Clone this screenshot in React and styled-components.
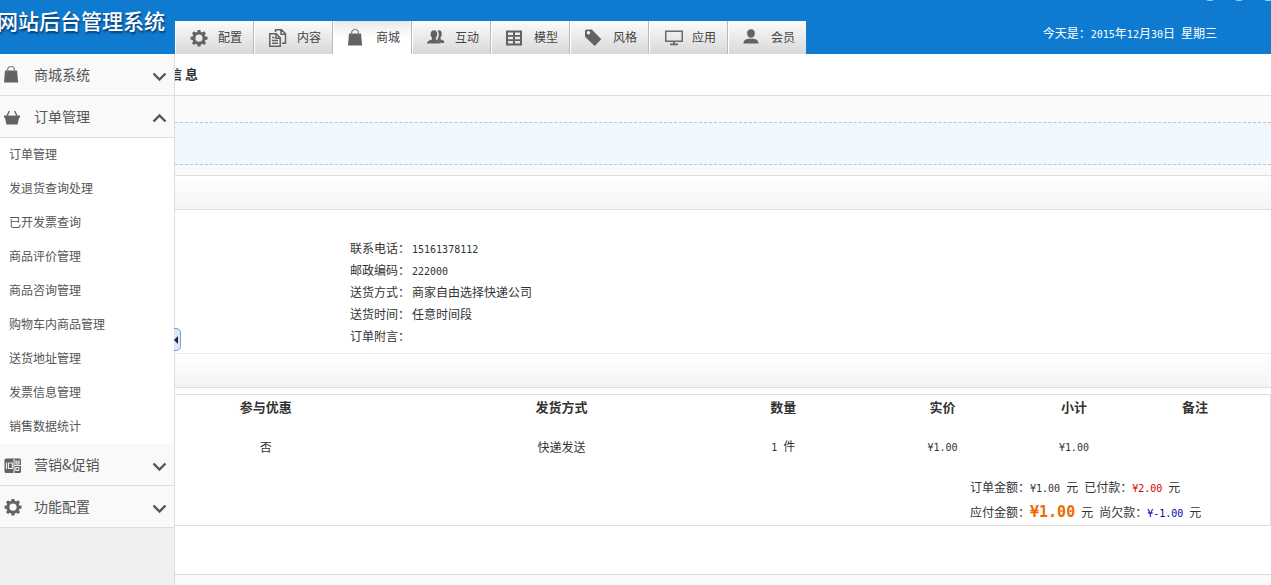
import React from "react";
import styled, { createGlobalStyle, css } from "styled-components";

const GlobalStyle = createGlobalStyle`
  *, *::before, *::after { box-sizing: border-box; }
  body {
    margin: 0;
    background: #fff;
    color: #333;
    font: 12px/22px "Noto Sans CJK SC", sans-serif;
  }
  h1, h2, p, dl, dd, ul { margin: 0; padding: 0; font-weight: normal; }
  button { font: inherit; color: inherit; cursor: pointer; }
  a { color: inherit; text-decoration: none; }
`;

const Page = styled.div`
  display: flex;
  flex-direction: column;
  min-height: 100vh;
`;

const Header = styled.header`
  position: relative;
  display: flex;
  height: 54px;
  background: #0e7bd0;
  overflow: hidden;
`;

const Brand = styled.div`
  display: flex;
  justify-content: flex-end;
  flex: none;
  width: 175px;
  padding-right: 10px;
  font-size: 21px;
  font-weight: 500;
  line-height: 40px;
  white-space: nowrap;
  color: #fff;
  text-shadow: 1px 2px 2px rgba(0, 30, 70, 0.7);
`;

const Nav = styled.nav`
  display: flex;
  align-self: flex-end;
  height: 33px;
`;

const Tab = styled.a`
  display: flex;
  align-items: center;
  gap: 10px;
  width: 79px;
  padding: 0 0 0 14px;
  border-left: 1px solid #fff;
  border-right: 1px solid #b9b9b9;
  background: linear-gradient(#fbfbfb, #d8d8d8);
  color: #444;
  white-space: nowrap;
  ${(p) => p.$active && css`background: linear-gradient(#e8e8e8, #fff 50%);`}
  &:last-child { width: 78px; border-right: 0; }
`;

const TabLabel = styled.span`
  padding-bottom: 2px;
`;

const Glyph = styled.svg`
  display: block;
  flex: none;
  width: 18px;
  height: 18px;
  overflow: visible;
  fill: #626262;
`;

const Today = styled.p`
  margin-left: auto;
  padding: 22px 54px 0 0;
  display: flex;
  gap: 6px;
  white-space: nowrap;
  color: #fff;
`;

const Bubbles = styled.div`
  position: absolute;
  top: -15px;
  right: -5px;
  display: flex;
  gap: 13px;
`;

const Bubble = styled.span`
  width: 16px;
  height: 16px;
  border-radius: 50%;
  background: #9fdcf5;
`;

const Body = styled.div`
  display: flex;
  flex: 1;
`;

const Sidebar = styled.aside`
  position: relative;
  flex: none;
  width: 175px;
  border-right: 1px solid #dcdcdc;
  background: #f0f0f0;
`;

const Section = styled.button`
  display: flex;
  align-items: center;
  width: 100%;
  height: 42px;
  padding: 0 7px 0 4px;
  border: 0;
  border-bottom: 1px solid #dedede;
  background: #f9f9f9;
  color: #555;
  font-size: 14px;
  text-align: left;
`;

const SectionName = styled.span`
  flex: 1;
  padding: 0 0 2px 12px;
`;

const Chevron = styled.svg`
  width: 15px;
  height: 10px;
  margin-top: 3px;
  fill: none;
  stroke: #555;
  stroke-width: 2.4;
`;

const Menu = styled.ul`
  list-style: none;
  background: #fff;
`;

const MenuLink = styled.a`
  display: block;
  padding: 0 0 2px 9px;
  line-height: 32px;
  color: #555;
`;

const Handle = styled.button`
  position: absolute;
  top: 274px;
  left: 174px;
  display: flex;
  align-items: center;
  width: 7px;
  height: 23px;
  padding: 0;
  border: 1px solid #7f9fce;
  border-left: 0;
  border-radius: 0 5px 5px 0;
  background: #dbe8f9;
`;

const Main = styled.main`
  display: flex;
  flex-direction: column;
  flex: 1;
  min-width: 0;
  overflow: hidden;
`;

const Title = styled.h1`
  height: 42px;
  margin-left: -6px;
  border-bottom: 1px solid #dedede;
  font-size: 13px;
  font-weight: bold;
  line-height: 40px;
`;

const Notice = styled.div`
  padding: 26px 0 10px;
  background: #fafafa;
`;

const NoticeStrip = styled.div`
  height: 43px;
  border: 1px dashed #bfc7cc;
  border-width: 1px 0;
  background: #f0f8ff;
`;

const Band = styled.div`
  flex: none;
  height: 35px;
  border-top: 1px solid ${(p) => (p.$soft ? "#ececec" : "#dedede")};
  border-bottom: 1px solid #dedede;
  background: linear-gradient(#fff, #f4f4f4);
`;

const Details = styled.dl`
  padding: 27px 20px 6px 175px;
`;

const Detail = styled.div`
  display: flex;
  height: 22px;
  gap: 2px;
`;

const Num = styled.span`
  font-family: "DejaVu Sans Mono", monospace;
  font-size: 10px;
  color: ${(p) => p.$color || "inherit"};
`;

const Due = styled(Num)`
  font-size: 15px;
  font-weight: bold;
`;

const Goods = styled.div`
  margin-top: 6px;
  border: 1px solid #dcdcdc;
  border-left: 0;
  padding-bottom: 1px;
`;

const Table = styled.table`
  width: 100%;
  border-collapse: collapse;
  table-layout: fixed;
  text-align: center;
`;

const Column = styled.col`
  width: ${(p) => p.$share}%;
`;

const Th = styled.th`
  height: 26px;
  padding: 0 0 2px;
  font-size: 13px;
  &:first-child { padding-right: 57px; }
`;

const Td = styled.td`
  height: 53px;
  padding: 0 0 1px;
  &:first-child { padding-right: 57px; }
`;

const Totals = styled.div`
  width: 300px;
  margin-left: auto;
`;

const TotalLine = styled.p`
  display: flex;
  gap: 6px;
  height: 25px;
  line-height: 25px;
  white-space: nowrap;
`;

const Footer = styled.footer`
  flex: 1;
  margin-top: 48px;
  border-top: 1px solid #dcdcdc;
  background: #fafafa;
`;

const icons = {
  gear: (
    <path transform="scale(0.9)" fillRule="evenodd" d="M8.4 1h3.2l.4 2.3 1.6.7 2-1.4 2.1 2.1-1.3 2 .7 1.6 2.4.4v2.9l-2.4.5-.7 1.6 1.4 2-2.2 2.1-2-1.3-1.6.7-.4 2.3H8.400l-.4-2.300-1.600-.7-2 1.300-2.200-2.100 1.400-2-.7-1.600L.6 11.600V8.700L2.900 8.300l.7-1.600-1.300-2L4.400 2.600l2 1.400 1.600-.7zM10 6.200a4 4 0 1 0 0 8 4 4 0 0 0 0-8z" />
  ),
  pages: (
    <g transform="translate(-1 -1)" fill="none" stroke="#626262" strokeWidth="1.500">
      <path d="M1.800 5.800h6.400l4 4v8.400H1.800z" fill="#ececec" />
      <path d="M8 6v4.200h4.200M4 9.500h2.500M4 12.500h6M4 15.300h6M7.500 4V1.800h6l4 4v9.400h-3.500M13 2v4.200h4.200" />
    </g>
  ),
  bag: (
    <g>
      <path d="M1 4.500h12L14.200 16.500H0z" />
      <path d="M3.500 6.500V4a3.500 3.500 0 0 1 7 0v2.500" fill="none" stroke="#808080" strokeWidth="1.200" />
    </g>
  ),
  people: (
    <g transform="translate(-1 -1)">
      <path d="M11.500 2.600c3-.9 4.500 1 4.200 3.600-.1 1.800-.7 2.700-1.200 3.600v1.400l3.700 1.700v2.200h-3.700c-.3-1.300-1.400-1.900-3-2.600V11c1.400-1.900 2-5.500 0-8.400z" />
      <path d="M8 2.200c2.300 0 3.400 1.700 3.200 4-.1 1.700-.7 2.700-1.400 3.700v1.500c2.200.8 4.400 1.300 4.600 4.100H1c.2-2.800 2.500-3.300 5-4.100V9.900C5.200 8.900 4.700 7.900 4.600 6.200c-.1-2.300 1.100-4 3.400-4z" />
    </g>
  ),
  grid: <path transform="translate(-2 -1)" fillRule="evenodd" d="M2 2.500h16v15H2zM4 4.500v2.500h5V4.500zm7 0v2.500h5V4.500zM4 8.800v2.500h5V8.800zm7 0v2.500h5V8.800zm-7 4.300v2.400h5v-2.400zm7 0v2.400h5v-2.400z" />,
  tag: <path transform="translate(-2 -1)" fillRule="evenodd" d="M2 2.500 3.200 1.400h5.600L18.300 11.300 11.700 18 2 8.800zM5.500 3a1.800 1.800 0 1 0 0 3.600 1.800 1.800 0 0 0 0-3.600z" />,
  screen: (
    <g transform="translate(0 -1)" fill="#6a6a6a">
      <path fillRule="evenodd" d="M1 2.500h18v11.500H1zm1.500 1.500v8.500h15V4z" />
      <path d="M9 14h2v1.500h3v1.800H6v-1.800h3z" />
    </g>
  ),
  user: <path transform="translate(-2 -1)" d="M10 1.200c2.400 0 3.900 1.600 3.900 4S12.400 9.700 10 9.700 6.100 7.600 6.100 5.200s1.500-4 3.900-4zM2.500 15.500c0-3 2.300-4.500 5-4.700h5c2.700.2 5 1.700 5 4.700z" />,
  basket: (
    <g transform="translate(-2 0)">
      <path d="M2 7.500h16v2.300h-1L15.600 16.500H4.400L3 9.800H2z" />
      <path d="M5 7.800 7.400 3M15 7.800l-2.400-4.800" fill="none" stroke="#626262" strokeWidth="1.400" />
    </g>
  ),
  coupon: (
    <g transform="translate(-2 0)">
      <rect x="2.500" y="2.500" width="16.500" height="14.500" rx="1.500" />
      <path d="M4.500 6.500v6.500M6.500 7h3.800v5.500H6.500zM12 3v14M14 4v4h3V4M14 6h3M12 9.500h7M13.800 11.500h3v3h-3z" fill="none" stroke="#eee" strokeWidth="1.100" />
    </g>
  ),
};

const Icon = ({ name }) => (
  <Glyph viewBox="0 0 18 18" aria-hidden="true">{icons[name]}</Glyph>
);

const tabs = [
  ["gear", "配置"],
  ["pages", "内容"],
  ["bag", "商城"],
  ["people", "互动"],
  ["grid", "模型"],
  ["tag", "风格"],
  ["screen", "应用"],
  ["user", "会员"],
];

const sections = [
  { icon: "bag", name: "商城系统" },
  {
    icon: "basket",
    name: "订单管理",
    items: [
      "订单管理", "发退货查询处理", "已开发票查询", "商品评价管理", "商品咨询管理",
      "购物车内商品管理", "送货地址管理", "发票信息管理", "销售数据统计",
    ],
  },
  { icon: "coupon", name: "营销&促销" },
  { icon: "gear", name: "功能配置" },
];

const columns = [
  ["参与优惠", 21.8],
  ["发货方式", 27],
  ["数量", 13.5],
  ["实价", 15.6],
  ["小计", 8.4],
  ["备注", 13.7],
];

export default function App() {
  return (
    <Page>
      <GlobalStyle />
      <Header>
        <Brand>网站后台管理系统</Brand>
        <Nav>
          {tabs.map(([icon, label]) => (
            <Tab key={label} href="#" $active={label === "商城"}>
              <Icon name={icon} />
              <TabLabel>{label}</TabLabel>
            </Tab>
          ))}
        </Nav>
        <Today>
          <span>今天是：<Num>2015</Num>年<Num>12</Num>月<Num>30</Num>日</span>
          <span>星期三</span>
        </Today>
        <Bubbles><Bubble /><Bubble /><Bubble /></Bubbles>
      </Header>
      <Body>
        <Sidebar>
          {sections.map(({ icon, name, items }) => (
            <React.Fragment key={name}>
              <Section type="button" aria-expanded={Boolean(items)}>
                <Icon name={icon} />
                <SectionName>{name}</SectionName>
                <Chevron viewBox="0 0 15 10" aria-hidden="true">
                  <path d={items ? "M1.500 8.500l6-6 6 6" : "M1.500 2.500l6 6 6-6"} />
                </Chevron>
              </Section>
              {items && (
                <Menu>
                  {items.map((item) => (
                    <li key={item}><MenuLink href="#">{item}</MenuLink></li>
                  ))}
                </Menu>
              )}
            </React.Fragment>
          ))}
          <Handle type="button" aria-label="收起菜单">
            <svg width="5" height="8" viewBox="0 0 5 8" aria-hidden="true">
              <path d="M4 0v8L0 4z" fill="#223" />
            </svg>
          </Handle>
        </Sidebar>
        <Main>
          <Title>信 息</Title>
          <Notice><NoticeStrip /></Notice>
          <Band />
          <Details>
            <Detail><dt>联系电话：</dt><dd><Num>15161378112</Num></dd></Detail>
            <Detail><dt>邮政编码：</dt><dd><Num>222000</Num></dd></Detail>
            <Detail><dt>送货方式：</dt><dd>商家自由选择快递公司</dd></Detail>
            <Detail><dt>送货时间：</dt><dd>任意时间段</dd></Detail>
            <Detail><dt>订单附言：</dt><dd /></Detail>
          </Details>
          <Band $soft />
          <Goods>
            <Table>
              <colgroup>
                {columns.map(([name, share]) => <Column key={name} $share={share} />)}
              </colgroup>
              <thead>
                <tr>{columns.map(([name]) => <Th key={name} scope="col">{name}</Th>)}</tr>
              </thead>
              <tbody>
                <tr>
                  <Td>否</Td>
                  <Td>快递发送</Td>
                  <Td><Num>1 </Num>件</Td>
                  <Td><Num>¥1.00</Num></Td>
                  <Td><Num>¥1.00</Num></Td>
                  <Td />
                </tr>
              </tbody>
            </Table>
            <Totals>
              <TotalLine>
                <span>订单金额：<Num>¥1.00</Num></span>
                <span>元</span>
                <span>已付款：<Num $color="#d00000">¥2.00</Num></span>
                <span>元</span>
              </TotalLine>
              <TotalLine>
                <span>应付金额：<Due $color="#f06a00">¥1.00</Due></span>
                <span>元</span>
                <span>尚欠款：<Num $color="#0000b0">¥-1.00</Num></span>
                <span>元</span>
              </TotalLine>
            </Totals>
          </Goods>
          <Footer />
        </Main>
      </Body>
    </Page>
  );
}
